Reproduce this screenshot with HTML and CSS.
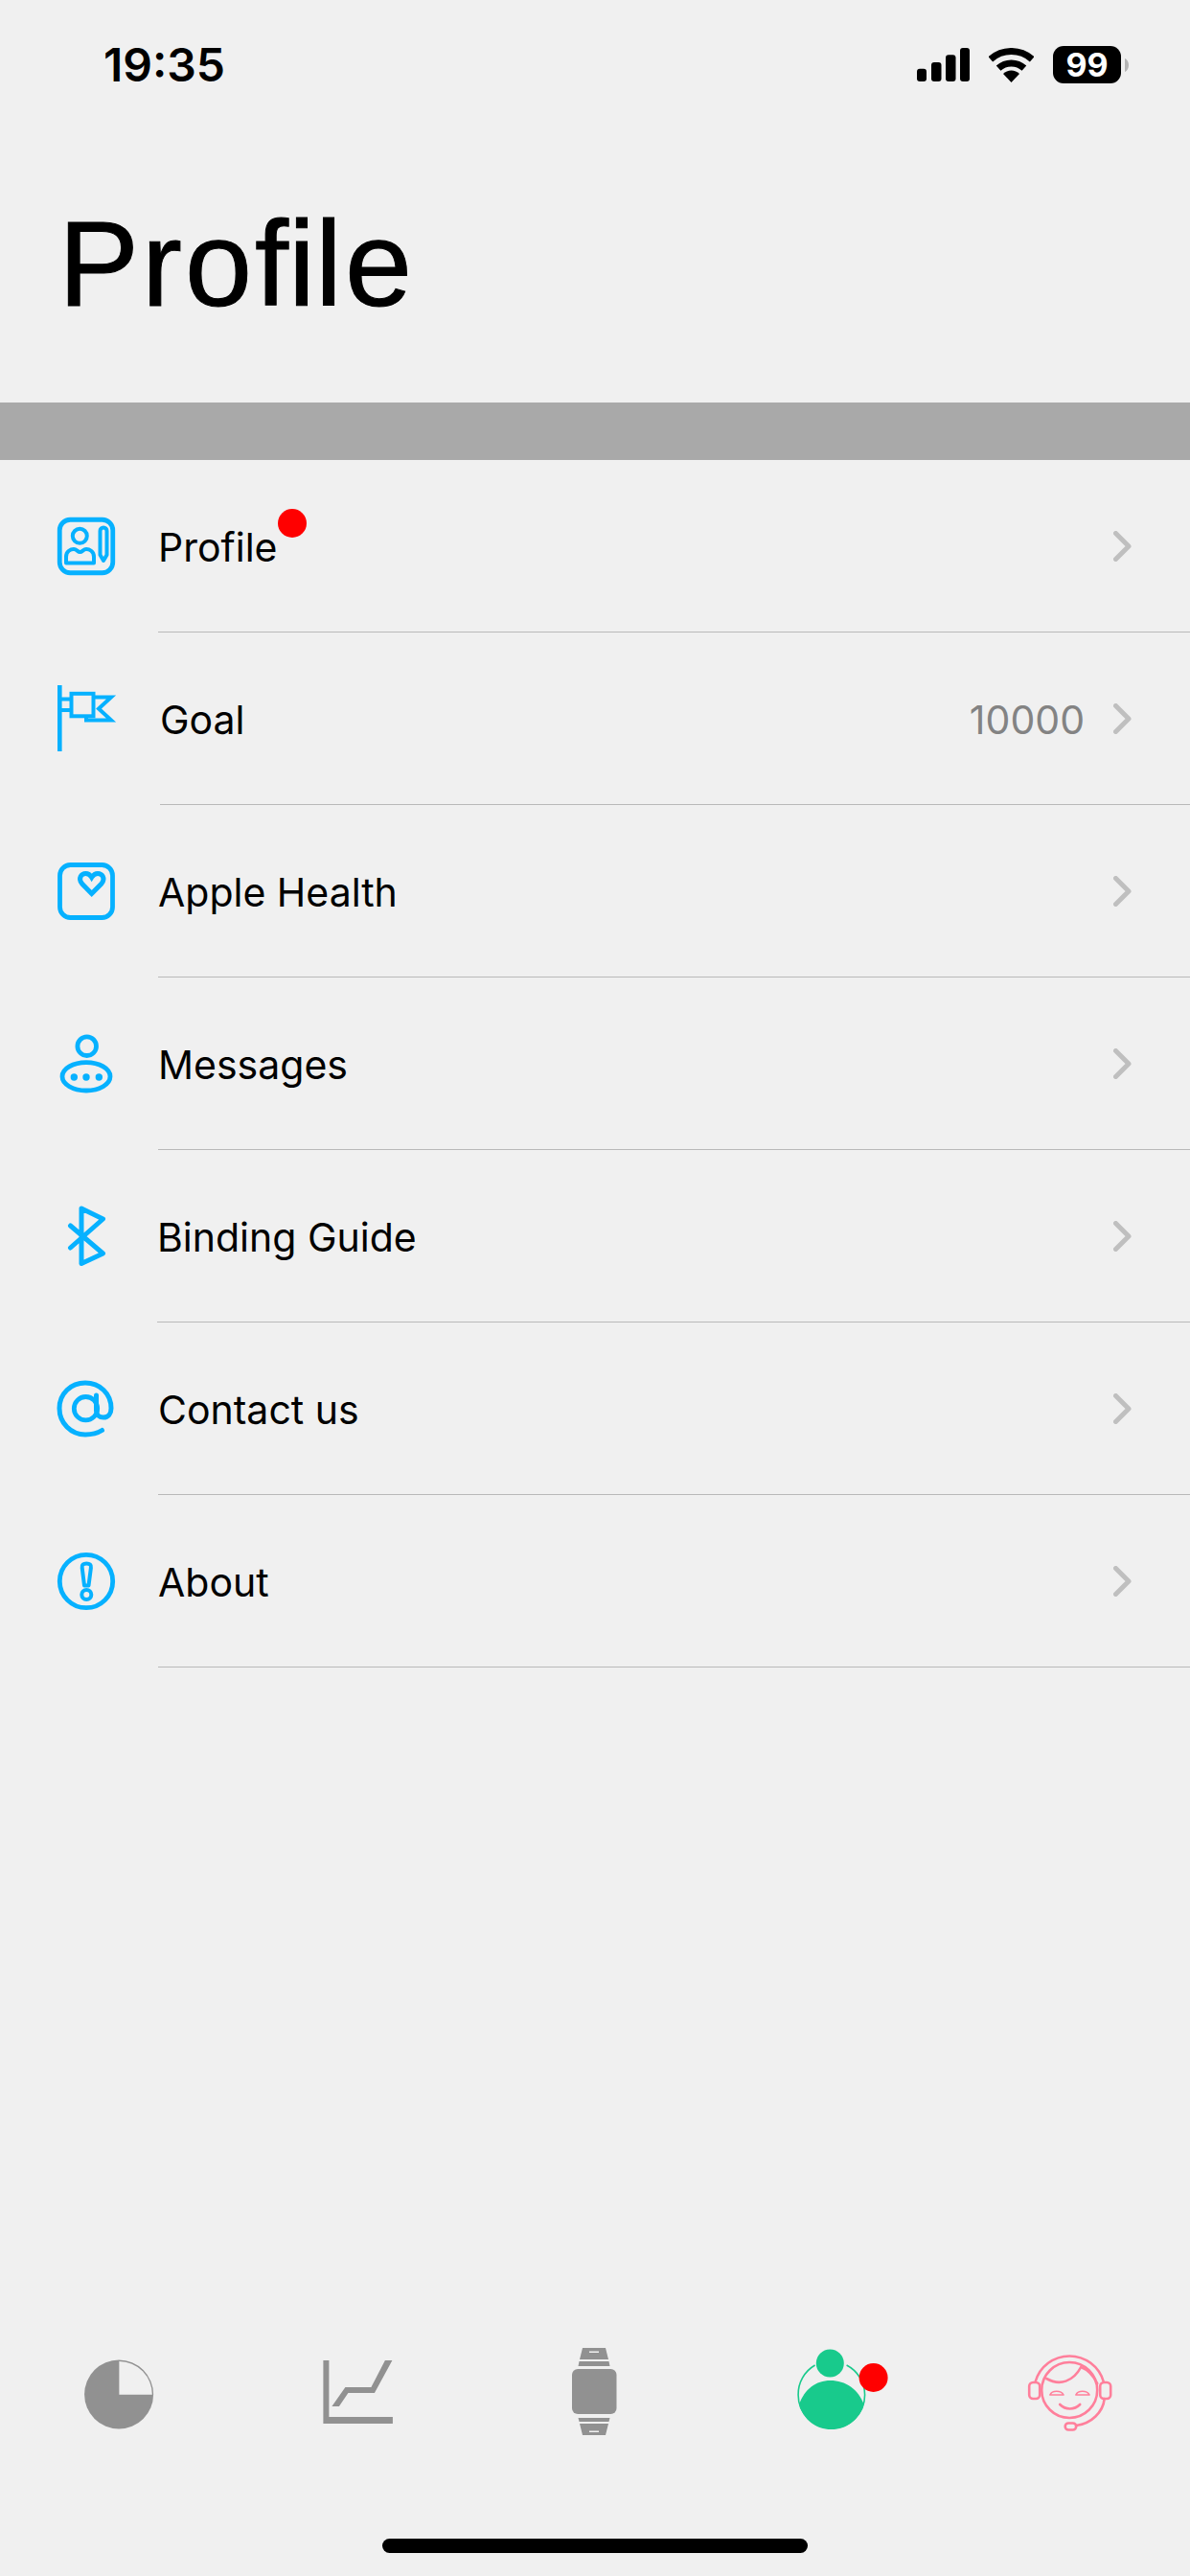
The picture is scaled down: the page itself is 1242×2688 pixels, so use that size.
FILE: index.html
```html
<!DOCTYPE html>
<html lang="en">
<head>
<meta charset="utf-8">
<title>Profile</title>
<link rel="stylesheet" href="styles.css">
</head>
<body>
<div class="screen">
  <header class="status">
    <span class="time">19:35</span>
    <div class="status-icons">
      <svg class="signal" viewBox="0 0 55 35"><rect x="0" y="21.7" width="10" height="13.3" rx="3"/><rect x="15" y="15" width="10.5" height="20" rx="3"/><rect x="30" y="7.3" width="10.5" height="27.7" rx="3"/><rect x="45" y="0" width="10" height="35" rx="3"/></svg>
      <svg class="wifi" viewBox="0 0 47 36"><path class="wifi-band" d="M1.8 11.8A32.5 32.5 0 0 1 45.2 11.8"/><path class="wifi-band" d="M10.1 21.1A20 20 0 0 1 36.9 21.1"/><path d="M23.5 36L15 27A12 12 0 0 1 32 27Z"/></svg>
      <div class="battery"><span class="battery-level">99</span></div>
      <svg class="nub" viewBox="0 0 4 14"><path d="M0 0C2.5 1 4 4 4 7S2.5 13 0 14Z"/></svg>
    </div>
  </header>

  <h1 class="title">Pro<span class="title-lig">fi</span>le</h1>
  <div class="band"></div>

  <nav class="list">
    <div class="row">
      <svg class="row-icon" viewBox="0 0 60 80">
        <rect class="st" x="2.25" y="12.25" width="55.5" height="55.5" rx="11"/>
        <circle class="st3" cx="23.3" cy="29.3" r="7.5"/>
        <path class="st3" d="M9 57.5V51C9 45 14 43 17 43C20 43 21 46 23.5 46C26 46 27 43 30 43C33 43 38 45 38 51V57.5Z"/>
        <path class="st3" d="M44.5 24A3.5 3.5 0 0 1 51.5 24V49L48 55L44.5 49Z"/>
      </svg>
      <div class="row-body">
        <span class="label">Profile<i class="badge"></i></span>
        <svg class="chevron" viewBox="0 0 19 32"><path d="M2.5 2.5L16 16L2.5 29.5"/></svg>
      </div>
    </div>

    <div class="row row-goal">
      <svg class="row-icon" viewBox="0 0 60 80">
        <rect class="fill" x="0" y="5" width="4.6" height="69"/>
        <path class="st-flag" d="M4 19.5H14M4 31H14"/>
        <rect class="st-flag" x="14.5" y="13.8" width="23" height="23.5"/>
        <path class="st-flag" d="M37.5 17.5H56L43 29.5L56 41.5H30V37"/>
      </svg>
      <div class="row-body">
        <span class="label">Goal</span>
        <span class="value">10000</span>
        <svg class="chevron" viewBox="0 0 19 32"><path d="M2.5 2.5L16 16L2.5 29.5"/></svg>
      </div>
    </div>

    <div class="row">
      <svg class="row-icon" viewBox="0 0 60 80">
        <rect class="st" x="2.5" y="12.5" width="55" height="55" rx="11"/>
        <path class="st-heart" d="M35.7 42.5L25.5 32C21 26.5 25 21.5 29.5 21.5C32.5 21.5 34.5 23.5 35.7 25.5C37 23.5 39 21.5 42 21.5C46.5 21.5 50.5 26.5 46 32Z"/>
      </svg>
      <div class="row-body">
        <span class="label">Apple Health</span>
        <svg class="chevron" viewBox="0 0 19 32"><path d="M2.5 2.5L16 16L2.5 29.5"/></svg>
      </div>
    </div>

    <div class="row">
      <svg class="row-icon" viewBox="0 0 60 80">
        <circle class="st" cx="30.7" cy="21.7" r="9.8"/>
        <ellipse class="st" cx="30" cy="53.3" rx="25" ry="14.7"/>
        <circle class="fill" cx="17.3" cy="54" r="3.7"/>
        <circle class="fill" cx="30" cy="54" r="3.7"/>
        <circle class="fill" cx="43.3" cy="54" r="3.7"/>
      </svg>
      <div class="row-body">
        <span class="label">Messages</span>
        <svg class="chevron" viewBox="0 0 19 32"><path d="M2.5 2.5L16 16L2.5 29.5"/></svg>
      </div>
    </div>

    <div class="row row-binding">
      <svg class="row-icon" viewBox="0 0 60 80">
        <path class="st-round" d="M13.5 29L47.5 58L25 68.5V11L47.5 22L13.5 52"/>
      </svg>
      <div class="row-body">
        <span class="label">Binding Guide</span>
        <svg class="chevron" viewBox="0 0 19 32"><path d="M2.5 2.5L16 16L2.5 29.5"/></svg>
      </div>
    </div>

    <div class="row">
      <svg class="row-icon" viewBox="0 0 60 80">
        <path class="st-round" d="M46.5 62.5C41 66 35 67 29 67C14 67 2 55 2 39.5C2 24 14 13 29 13C44 13 56 24 56 39.5C56 45 53 49 48 49C43 49 40.5 46 40.5 42V26"/>
        <circle class="st" cx="29.5" cy="39.7" r="12.2"/>
      </svg>
      <div class="row-body">
        <span class="label">Contact us</span>
        <svg class="chevron" viewBox="0 0 19 32"><path d="M2.5 2.5L16 16L2.5 29.5"/></svg>
      </div>
    </div>

    <div class="row">
      <svg class="row-icon" viewBox="0 0 60 80">
        <circle class="st" cx="30" cy="40" r="27.7"/>
        <path class="st3" d="M25.7 26C25.2 22.8 27 21.5 30.3 21.5C33.6 21.5 35.4 22.8 34.9 26L32.5 44.5H28Z"/>
        <circle class="st3" cx="30.3" cy="54" r="5"/>
      </svg>
      <div class="row-body">
        <span class="label">About</span>
        <svg class="chevron" viewBox="0 0 19 32"><path d="M2.5 2.5L16 16L2.5 29.5"/></svg>
      </div>
    </div>
  </nav>

  <footer class="tabbar">
    <svg class="tab" viewBox="64.2 2447 120 100">
      <circle class="tab-grey" cx="124.3" cy="2498.5" r="36"/>
      <path class="tab-cut" d="M124.6 2498.7V2464A34.5 34.5 0 0 1 159 2498.7Z"/>
    </svg>
    <svg class="tab" viewBox="312.6 2447 120 100">
      <path class="tab-grey" d="M337 2463H343V2522H409.5V2529H337Z"/>
      <path class="tab-grey" d="M346 2511L360 2491H387L401.5 2463H409L390.5 2497H363L353.5 2511Z"/>
    </svg>
    <svg class="tab" viewBox="561 2447 120 100">
      <rect class="tab-grey" x="597" y="2472" width="46.5" height="47" rx="6"/>
      <path class="tab-grey" d="M608 2450H632L635 2462H605ZM604.5 2464H635.5L636.5 2469H603.5Z"/>
      <path class="tab-grey" d="M603.5 2523H636.5L635.5 2527H604.5ZM605 2529H635L632 2541H608Z"/>
      <rect class="tab-cut" x="615" y="2453.5" width="10" height="1.5"/>
      <rect class="tab-cut" x="615" y="2536.5" width="10" height="1.5"/>
    </svg>
    <svg class="tab" viewBox="809.4 2447 120 100">
      <path class="tab-ring" d="M851 2468A35 35 0 0 0 833.5 2499A34.5 34.5 0 0 0 903 2499A35 35 0 0 0 884 2468"/>
      <circle class="tab-green" cx="866.7" cy="2466" r="14.5"/>
      <path class="tab-green" d="M834.5 2509C840 2493 852 2484 867 2484C883 2484 896 2493 902 2509C897 2525 884 2535 868 2535C852 2535 839 2525 834.5 2509Z"/>
      <circle class="tab-red" cx="912" cy="2481" r="15"/>
    </svg>
    <svg class="tab" viewBox="1057.8 2447 120 100">
      <path class="tab-pink" d="M1080.5 2485A37 37 0 0 1 1151.5 2485"/>
      <path class="tab-pink" d="M1152.5 2503C1151 2517 1139 2529 1123 2531"/>
      <circle class="tab-pink" cx="1116" cy="2494" r="29"/>
      <rect class="tab-pink" x="1074" y="2486" width="11" height="17" rx="4"/>
      <rect class="tab-pink" x="1148" y="2486" width="11" height="17" rx="4"/>
      <rect class="tab-pink" x="1111.5" y="2528.5" width="11.5" height="7" rx="3.5"/>
      <path class="tab-pink" d="M1092 2482C1106 2490 1120 2485 1128 2470C1136 2473 1141 2479 1145 2487"/>
      <path class="tab-pink-thin" d="M1095.5 2499C1098 2494 1107 2494 1110 2499ZM1122.5 2499C1125 2494 1134 2494 1137 2499Z"/>
      <path class="tab-pink" d="M1106 2509C1112 2515 1121 2515 1127 2509"/>
    </svg>
  </footer>
  <div class="home-indicator"></div>
</div>
</body>
</html>
```

FILE: styles.css
```css
* { box-sizing: border-box; }

html, body {
  margin: 0;
  padding: 0;
  background: #f0f0f0;
}

.screen {
  width: 1242px;
  height: 2688px;
  display: flex;
  flex-direction: column;
  overflow: hidden;
  background: #f0f0f0;
  color: #000;
  font-family: Inter, "Liberation Sans", sans-serif;
}

/* Status bar */
.status {
  height: 100px;
  padding: 48px 64px 0 108px;
  display: flex;
  justify-content: space-between;
  align-items: flex-start;
}

.time {
  font-size: 48px;
  line-height: 39px;
  font-weight: 600;
}

.status-icons {
  display: flex;
  align-items: center;
}

.signal { width: 55px; height: 35px; margin-right: 20px; }
.wifi { width: 47px; height: 36px; margin-right: 20px; }
.wifi-band { fill: none; stroke: #000; stroke-width: 7; }

.battery {
  width: 71px;
  height: 39px;
  border-radius: 11px;
  background: #000;
  display: flex;
  align-items: center;
  justify-content: center;
}

.battery-level {
  color: #fff;
  font-size: 34px;
  font-weight: 700;
  line-height: 39px;
}

.nub { width: 4px; height: 14px; margin-left: 4px; fill: #b4b4b4; }

/* Title */
.title {
  margin: 0;
  height: 320px;
  padding: 116px 0 0 61px;
  font-family: "Liberation Sans", Arial, sans-serif;
  font-size: 126px;
  line-height: 120px;
  font-weight: 400;
  letter-spacing: 3px;
  -webkit-text-stroke: 1px #000;
}

.title-lig { letter-spacing: 0; }

.band {
  height: 60px;
  background: #a9a9a9;
  flex: none;
}

/* List */
.list {
  flex: 1;
  display: flex;
  flex-direction: column;
}

.row {
  height: 180px;
  flex: none;
  padding-left: 60px;
  display: flex;
  align-items: stretch;
}

.row-icon {
  width: 60px;
  height: 80px;
  flex: none;
  align-self: center;
  margin-right: 45px;
  overflow: visible;
}

.row-goal .row-icon { margin-right: 47px; }
.row-binding .row-icon { margin-right: 44px; }

.row-body {
  flex: 1;
  display: flex;
  align-items: center;
  padding-right: 61px;
  border-bottom: 1px solid #b9b9b9;
}

.label {
  position: relative;
  margin-top: 2px;
  font-size: 41px;
  line-height: 50px;
  color: #000;
}

.badge {
  position: absolute;
  right: -31px;
  top: -15px;
  width: 30px;
  height: 30px;
  border-radius: 50%;
  background: #ff0000;
}

.value {
  margin-left: auto;
  margin-top: 2px;
  margin-right: 30px;
  font-size: 41px;
  line-height: 50px;
  color: #838383;
}

.chevron {
  width: 19px;
  height: 32px;
  flex: none;
  margin-left: auto;
  fill: none;
  stroke: #bfbfbf;
  stroke-width: 5;
  stroke-linecap: round;
  stroke-linejoin: round;
}

.value + .chevron { margin-left: 0; }

/* Icon strokes */
.st { fill: none; stroke: #06b1ff; stroke-width: 4.8; }
.st3 { fill: none; stroke: #06b1ff; stroke-width: 4; stroke-linejoin: round; }
.st-heart { fill: none; stroke: #06b1ff; stroke-width: 5; stroke-linejoin: miter; }
.st-flag { fill: none; stroke: #06b1ff; stroke-width: 4; stroke-miterlimit: 8; }
.st-round { fill: none; stroke: #06b1ff; stroke-width: 5; stroke-linecap: round; stroke-linejoin: round; }
.fill { fill: #06b1ff; }

/* Tab bar */
.tabbar {
  height: 100px;
  flex: none;
  display: grid;
  grid-template-columns: repeat(5, 1fr);
  justify-items: center;
}

.tab { width: 120px; height: 100px; display: block; }
.tab-grey { fill: #919191; }
.tab-cut { fill: #f0f0f0; }
.tab-ring { fill: none; stroke: #18ca8c; stroke-width: 1.6; }
.tab-green { fill: #18ca8c; }
.tab-red { fill: #ff0000; }
.tab-pink { fill: none; stroke: #ff7f9b; stroke-width: 2.6; stroke-linecap: round; }
.tab-pink-thin { fill: none; stroke: #ff7f9b; stroke-width: 1.3; stroke-linejoin: round; }

.home-indicator {
  flex: none;
  width: 444px;
  height: 15px;
  margin: 102px auto 24px;
  border-radius: 8px;
  background: #000;
}
```
